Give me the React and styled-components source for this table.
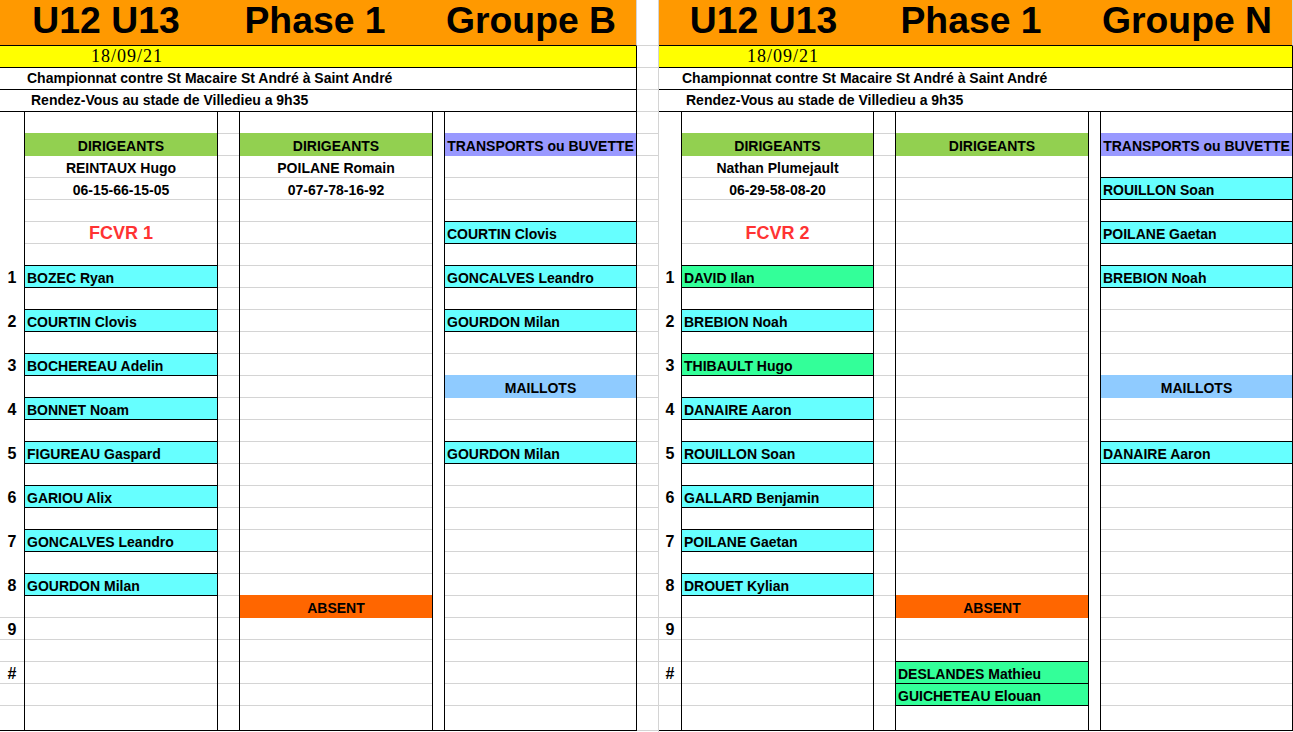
import React from 'react';
import styled, { createGlobalStyle } from 'styled-components';

const GRID = '#d4d4d4';
const LAST_ROW = 27;

const GlobalStyle = createGlobalStyle`
  html, body {
    margin: 0;
    padding: 0;
    background: #fff;
  }
  body {
    font-family: "Liberation Sans", Arial, sans-serif;
    font-weight: bold;
    font-size: 14px;
    color: #000;
    overflow: hidden;
  }
`;

const Sheet = styled.div`
  display: flex;
  width: 1293px;
  height: 732px;
  overflow: hidden;
`;

const Panel = styled.div`
  display: flex;
  flex-direction: column;
  flex: none;
  width: ${p => p.$width}px;
`;

const TitleBar = styled.div`
  display: grid;
  grid-template-columns: ${p => p.$cols};
  height: 46px;
  box-sizing: border-box;
  background: #ff9900;
  border-bottom: 1px solid #000;
  border-right: 1px solid ${GRID};
`;

const TitleCell = styled.div`
  font-size: 37.33px;
  line-height: 41px;
  text-align: center;
  white-space: nowrap;
  padding-right: ${p => p.$shift}px;
`;

const DateBar = styled.div`
  height: 22px;
  box-sizing: border-box;
  background: #ffff00;
  border-bottom: 1px solid #000;
  border-right: 1px solid #000;
  padding-left: ${p => p.$indent}px;
  font-family: "Liberation Serif", "Times New Roman", serif;
  font-weight: normal;
  font-size: 18px;
  letter-spacing: 1px;
  line-height: 20px;
`;

const InfoBar = styled.div`
  height: 22px;
  box-sizing: border-box;
  border-bottom: 1px solid #000;
  border-right: 1px solid #000;
  padding-left: ${p => p.$indent}px;
  line-height: 21px;
  white-space: nowrap;
`;

const Body = styled.div`
  display: flex;
`;

const Column = styled.div`
  display: flex;
  flex-direction: column;
  flex: none;
  width: ${p => p.$w}px;
  box-sizing: border-box;
  border-right: 1px solid #000;
`;

const Cell = styled.div`
  height: ${p => p.$h}px;
  box-sizing: border-box;
  border-bottom: 1px solid ${p => (p.$line ? GRID : 'transparent')};
  white-space: nowrap;
  line-height: 25px;
`;

const BandCell = styled(Cell)`
  background: ${p => p.$bg};
  border-bottom-color: ${p => p.$bg};
  box-shadow: 0 -1px 0 ${p => p.$bg};
  text-align: center;
`;

const PlayerCell = styled(Cell)`
  background: ${p => p.$bg};
  border-bottom-color: #000;
  box-shadow: 0 -1px 0 #000;
  padding-left: 2px;
`;

const InfoCell = styled(Cell)`
  text-align: center;
`;

const TeamCell = styled(Cell)`
  text-align: center;
  color: #ff3333;
  font-size: 18px;
  line-height: 22px;
`;

const NumberCell = styled(Cell)`
  text-align: center;
  font-size: 16px;
  line-height: 23.5px;
`;

const BANDS = {
  dirigeants: '#92d050',
  transport: '#9999ff',
  maillots: '#8fcbff',
  absent: '#ff6600',
};

const renderCell = (entry, i, gridFrom) => {
  const h = i === LAST_ROW ? 25 : 22;
  const line = gridFrom !== null && i >= gridFrom;
  const last = i === LAST_ROW;
  const base = { key: i, $h: h, $line: line, style: last ? { borderBottomColor: '#000' } : undefined };
  if (!entry) return <Cell {...base} />;
  const [kind, text] = entry;
  if (BANDS[kind]) return <BandCell {...base} $bg={BANDS[kind]}>{text}</BandCell>;
  if (kind === 'player') return <PlayerCell {...base} $bg="#66ffff">{text}</PlayerCell>;
  if (kind === 'mint') return <PlayerCell {...base} $bg="#33ff99">{text}</PlayerCell>;
  if (kind === 'team') return <TeamCell {...base}>{text}</TeamCell>;
  if (kind === 'num') return <NumberCell {...base}>{text}</NumberCell>;
  return <InfoCell {...base}>{text}</InfoCell>;
};

const SheetColumn = ({ w, entries = {}, gridFrom = 0 }) => (
  <Column $w={w}>
    {Array.from({ length: LAST_ROW + 1 }, (_, i) => renderCell(entries[i], i, gridFrom))}
  </Column>
);

const NUMBERS = {
  7: ['num', '1'], 9: ['num', '2'], 11: ['num', '3'], 13: ['num', '4'],
  15: ['num', '5'], 17: ['num', '6'], 19: ['num', '7'], 21: ['num', '8'],
  23: ['num', '9'], 25: ['num', '#'],
};

const TRANSPORT_HEAD = ['transport', 'TRANSPORTS ou BUVETTE'];
const DIRIGEANTS = ['dirigeants', 'DIRIGEANTS'];

const panels = [
  {
    cols: [25, 193, 22, 193, 12, 192],
    title: ['U12 U13', 'Phase 1', 'Groupe B'],
    indent: { date: 91, match: 27, meet: 31 },
    b: {
      1: DIRIGEANTS,
      2: ['info', 'REINTAUX Hugo'],
      3: ['info', '06-15-66-15-05'],
      5: ['team', 'FCVR 1'],
      7: ['player', 'BOZEC Ryan'],
      9: ['player', 'COURTIN Clovis'],
      11: ['player', 'BOCHEREAU Adelin'],
      13: ['player', 'BONNET Noam'],
      15: ['player', 'FIGUREAU Gaspard'],
      17: ['player', 'GARIOU Alix'],
      19: ['player', 'GONCALVES Leandro'],
      21: ['player', 'GOURDON Milan'],
    },
    d: {
      1: DIRIGEANTS,
      2: ['info', 'POILANE Romain'],
      3: ['info', '07-67-78-16-92'],
      22: ['absent', 'ABSENT'],
    },
    f: {
      1: TRANSPORT_HEAD,
      5: ['player', 'COURTIN Clovis'],
      7: ['player', 'GONCALVES Leandro'],
      9: ['player', 'GOURDON Milan'],
      12: ['maillots', 'MAILLOTS'],
      15: ['player', 'GOURDON Milan'],
    },
  },
  {
    cols: [23, 192, 22, 193, 12, 192],
    title: ['U12 U13', 'Phase 1', 'Groupe N'],
    indent: { date: 88, match: 23, meet: 27 },
    b: {
      1: DIRIGEANTS,
      2: ['info', 'Nathan Plumejault'],
      3: ['info', '06-29-58-08-20'],
      5: ['team', 'FCVR 2'],
      7: ['mint', 'DAVID Ilan'],
      9: ['player', 'BREBION Noah'],
      11: ['mint', 'THIBAULT Hugo'],
      13: ['player', 'DANAIRE Aaron'],
      15: ['player', 'ROUILLON Soan'],
      17: ['player', 'GALLARD Benjamin'],
      19: ['player', 'POILANE Gaetan'],
      21: ['player', 'DROUET Kylian'],
    },
    d: {
      1: DIRIGEANTS,
      22: ['absent', 'ABSENT'],
      25: ['mint', 'DESLANDES Mathieu'],
      26: ['mint', 'GUICHETEAU Elouan'],
    },
    f: {
      1: TRANSPORT_HEAD,
      3: ['player', 'ROUILLON Soan'],
      5: ['player', 'POILANE Gaetan'],
      7: ['player', 'BREBION Noah'],
      12: ['maillots', 'MAILLOTS'],
      15: ['player', 'DANAIRE Aaron'],
    },
  },
];

const Match = ({ data }) => {
  const [a, b, c, d, e, f] = data.cols;
  const width = a + b + c + d + e + f;
  return (
    <Panel $width={width}>
      <TitleBar $cols={`${a + b}px ${c + d}px 1fr`}>
        <TitleCell $shift={6}>{data.title[0]}</TitleCell>
        <TitleCell $shift={21}>{data.title[1]}</TitleCell>
        <TitleCell $shift={7}>{data.title[2]}</TitleCell>
      </TitleBar>
      <DateBar $indent={data.indent.date}>18/09/21</DateBar>
      <InfoBar $indent={data.indent.match}>Championnat contre St Macaire St André à Saint André</InfoBar>
      <InfoBar $indent={data.indent.meet}>Rendez-Vous au stade de Villedieu a 9h35</InfoBar>
      <Body>
        <SheetColumn w={a} entries={NUMBERS} gridFrom={22} />
        <SheetColumn w={b} entries={data.b} />
        <SheetColumn w={c} />
        <SheetColumn w={d} entries={data.d} />
        <SheetColumn w={e} gridFrom={null} />
        <SheetColumn w={f} entries={data.f} />
      </Body>
    </Panel>
  );
};

const GapCell = styled.div`
  height: ${p => p.$h}px;
  box-sizing: border-box;
  border-bottom: 1px solid ${GRID};
`;

const GapColumn = styled.div`
  flex: none;
  width: 22px;
  box-sizing: border-box;
  border-right: 1px solid ${GRID};
`;

const GAP_ROWS = [46, 22, 22, 22, ...Array(27).fill(22), 25];

export default function App() {
  return (
    <>
      <GlobalStyle />
      <Sheet>
        <Match data={panels[0]} />
        <GapColumn>
          {GAP_ROWS.map((h, i) => <GapCell key={i} $h={h} />)}
        </GapColumn>
        <Match data={panels[1]} />
      </Sheet>
    </>
  );
}
